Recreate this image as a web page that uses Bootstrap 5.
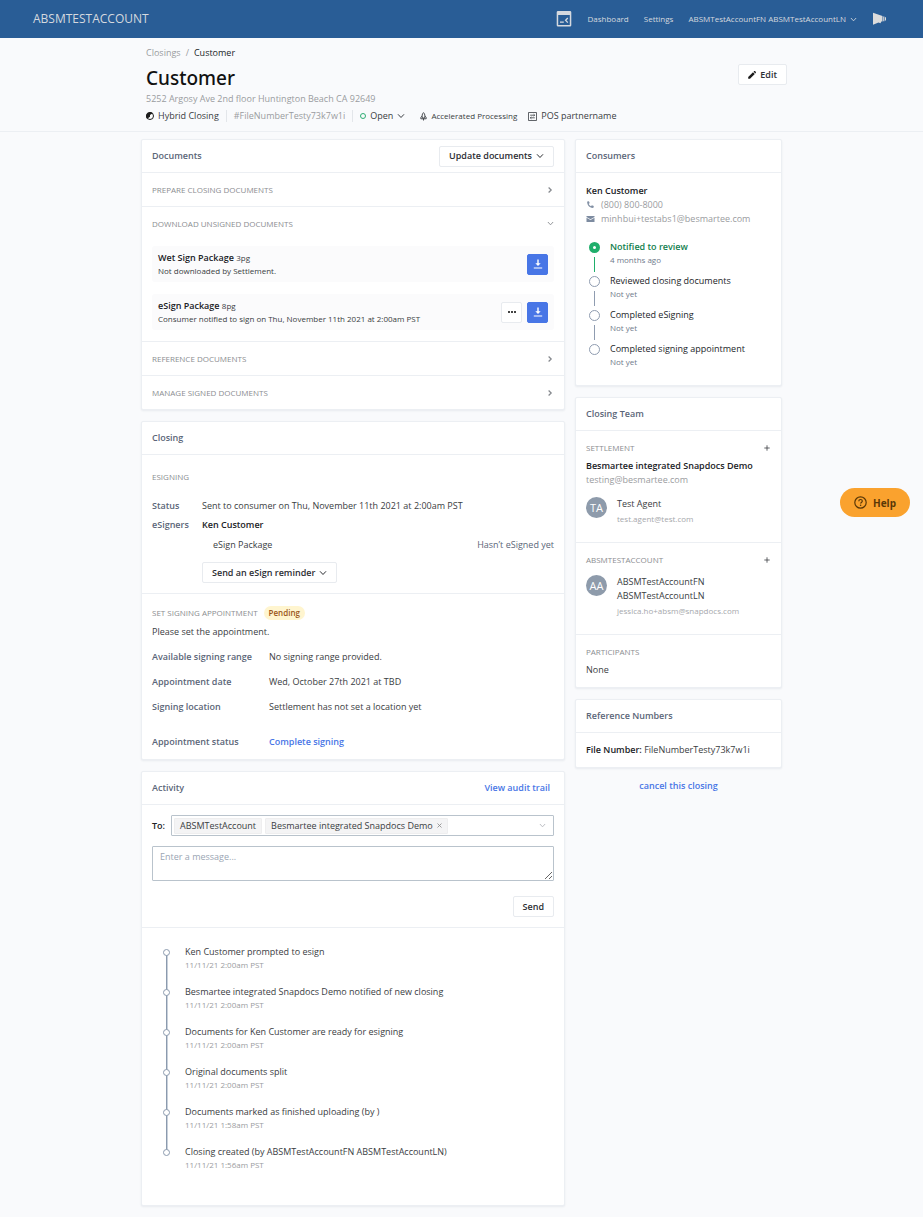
<!DOCTYPE html>
<html lang="en">
<head>
<meta charset="utf-8">
<meta name="viewport" content="width=device-width, initial-scale=1">
<title>Customer - Closings</title>
<link href="https://cdn.jsdelivr.net/npm/bootstrap@5.3.0/dist/css/bootstrap.min.css" rel="stylesheet">
<style>
  :root { --line: #eceff3; --ink: #3a3d42; --strong: #202226; --muted: #9a9ca0; --slate: #5b6678; --blue: #4876e6; }
  body { font-family: "Open Sans", "Noto Sans", sans-serif; font-size: 9px; line-height: 14px; color: var(--ink); background: #f9fafc; }
  a { text-decoration: none; color: var(--blue); }
  svg { display: block; flex: none; }
  strong, .semi { font-weight: 600; color: var(--strong); }
  .fs-tiny { font-size: 8px; }
  .dim { color: var(--muted); }
  .faint { color: #b3b6bb; }
  .slate { color: var(--slate); }

  .topbar { background: #295d96; height: 38px; padding: 0 36px 0 33px; }
  .topbar a, .topbar button { color: #d5d9df; }
  .topbar .brand { font-size: 12px; }
  .topbar .menu { font-size: 8px; gap: 15px; }
  .plain { border: 0; background: none; padding: 0; color: inherit; font-size: inherit; line-height: inherit; }

  .page-head { border-bottom: 1px solid var(--line); padding: 8px 0; }
  .head-inner { max-width: 651px; padding: 0 0 0 10px; }
  .crumbs { gap: 5px; }
  .page-title { font: 500 19px/24px "Noto Sans", "Open Sans", sans-serif; color: #111; margin: 6px 0 2px; }
  .meta { margin-top: 3px; gap: 7px; }
  .meta .rule { width: 1px; height: 12px; background: #e3e6ea; }
  .ring { width: 6px; height: 6px; border: 1px solid #2fae74; border-radius: 50%; }
  .edit { margin-top: 18px; }

  .btn-box { display: inline-flex; align-items: center; justify-content: center; height: 21px; padding: 0 9px; gap: 4px; border: 1px solid #e8ebef; border-radius: 2px; background: #fff; font-size: 9px; line-height: 14px; font-weight: 600; color: #2c2e33; }
  .btn-sq { width: 21px; padding: 0; }
  .btn-dl { background: var(--blue); border-color: var(--blue); color: #fff; }

  .columns { display: grid; grid-template-columns: minmax(0, 1fr) 207px; gap: 10px; max-width: 641px; padding-top: 7px; padding-bottom: 10px; align-items: start; }
  .stack { display: grid; gap: 11px; }
  .panel { background: #fff; border: 1px solid var(--line); border-radius: 2px; box-shadow: 0 1px 2px rgba(40, 60, 90, .08); }
  .panel-head { display: flex; align-items: center; justify-content: space-between; height: 33px; padding: 0 10px; border-bottom: 1px solid var(--line); }
  .panel-head h2 { font-size: 9px; line-height: 14px; font-weight: 600; color: var(--slate); margin: 0; }
  .block { padding: 10px; }
  .block-esign { padding-top: 15px; }
  .block-appt { padding-top: 12px; }
  .block-consumer { padding-top: 11px; }
  .block + .block, .fold + .fold, .block + .log { border-top: 1px solid var(--line); }
  .caps { font-size: 8px; line-height: 14px; font-weight: 400; color: #8b8d91; text-transform: uppercase; margin: 0; }
  .fold-toggle { display: flex; width: 100%; height: 33px; align-items: center; justify-content: space-between; padding: 0 10px; border: 0; background: none; color: #85888d; }
  .docs { display: grid; gap: 12px; padding: 6px 10px 11px; }
  .doc { min-height: 36px; background: #fbfbfc; border-radius: 3px; padding: 0 6px; gap: 5px; line-height: 13px; }

  .facts { display: grid; margin: 0; }
  .facts dt { font-weight: 600; color: var(--slate); }
  .facts dd { margin: 0; }
  .facts-sign { grid-template-columns: 50px 1fr; row-gap: 5px; margin-top: 15px; }
  .facts-appt { grid-template-columns: 117px 1fr; row-gap: 11px; margin-top: 11px; }
  .facts-appt .spaced { margin-top: 10px; }
  .package { padding: 6px 0 10px 11px; }
  .appt-head { gap: 6px; margin-bottom: 5px; }
  .pill { font-size: 8px; font-weight: 600; color: #9a5518; background: #fff5cf; border-radius: 7px; padding: 0 5px; }

  .to-row { gap: 6px; }
  .to-box { display: flex; align-items: center; gap: 3px; height: 21px; padding: 0 7px 0 2px; border: 1px solid #b9c3cc; border-radius: 1px; background: #fff; }
  .to-box input { flex: 1; min-width: 0; border: 0; outline: 0; font-size: 9px; height: 14px; }
  .tag { display: flex; align-items: center; gap: 4px; height: 16px; padding: 0 5px; background: #f4f4f5; border: 1px solid #eeeeef; border-radius: 1px; }
  .message { display: block; width: 100%; height: 35px; margin: 10px 0 15px; padding: 3px 7px; border: 1px solid #b9c3cc; border-radius: 1px; font-size: 9px; line-height: 14px; resize: vertical; }
  .message::placeholder { color: #9aa5b3; }

  .log { list-style: none; margin: 0; padding: 17px 10px 34px 21px; line-height: 13px; }
  .log li { position: relative; min-height: 40px; padding-left: 22px; }
  .log li:last-child { min-height: 26px; }
  .log li::before { content: ""; position: absolute; left: 0; top: 4px; width: 7px; height: 7px; border: 1px solid #8b9aae; border-radius: 50%; background: #fff; z-index: 1; }
  .log li:not(:last-child)::after { content: ""; position: absolute; left: 3px; top: 10px; bottom: -5px; width: 1px; background: #8b9aae; box-shadow: 1px 0 0 #c9d1db; }

  .contact { gap: 6px; }
  .steps { list-style: none; margin: 14px 0 0; padding: 0; }
  .steps li { position: relative; min-height: 34px; padding-left: 24px; color: #222529; }
  .steps li:last-child { min-height: 33px; }
  .steps li::before { content: ""; position: absolute; left: 3px; top: 2px; width: 11px; height: 11px; border: 1px solid #8f9cb0; border-radius: 50%; background: #fff; }
  .steps li:not(:last-child)::after { content: ""; position: absolute; left: 8px; top: 17px; height: 15px; width: 1px; background: #8f9cb0; }
  .steps .done { color: #12804e; font-weight: 600; }
  .steps .done::before { border: 4px solid #1fae6b; }
  .steps .done:not(:last-child)::after { background: #1fae6b; }
  .steps small { display: block; font-size: 8px; line-height: 12px; font-weight: 400; color: #6f7a8b; }

  .person { display: flex; gap: 10px; }
  .person-below { margin-top: 10px; }
  .face { flex: none; width: 21px; height: 21px; border-radius: 50%; background: #8e9bab; color: #fff; font-size: 11px; line-height: 21px; text-align: center; }
  .person small { display: block; font-size: 8px; margin-top: 1px; color: #a6a8ac; }
  .help { position: fixed; right: 13px; top: 488px; display: flex; align-items: center; gap: 6px; height: 29px; padding: 0 14px; border: 0; border-radius: 15px; background: #faa22e; color: #5a3807; font-size: 10px; font-weight: 700; }
</style>
<script src="https://cdn.jsdelivr.net/npm/bootstrap@5.3.0/dist/js/bootstrap.bundle.min.js"></script>
</head>
<body>
<svg class="d-none" aria-hidden="true">
  <symbol id="down" viewBox="0 0 8 8"><path d="M1 2.3 4 5.500 7 2.300" fill="none" stroke="currentColor"/></symbol>
  <symbol id="right" viewBox="0 0 8 8"><path d="M2.600 1.500 5.200 4 2.600 6.500" fill="none" stroke="currentColor" stroke-width="1.200"/></symbol>
  <symbol id="plus" viewBox="0 0 8 8"><path d="M4 1.300v5.400M1.300 4h5.400" stroke="currentColor" stroke-width=".8"/></symbol>
  <symbol id="load" viewBox="0 0 12 12"><path d="M5.300 1.500h1.400v3.800h2L6 8 3.300 5.300h2zM1.800 9.600h8.400v1H1.800z" fill="currentColor"/></symbol>
</svg>

<nav class="topbar d-flex align-items-center justify-content-between">
  <a class="brand" href="#">ABSMTESTACCOUNT</a>
  <div class="menu d-flex align-items-center">
    <a href="#" aria-label="Console"><svg width="16" height="16" viewBox="0 0 16 16"><path fill="currentColor" fill-rule="evenodd" d="M2 0h12a1.300 1.300 0 0 1 1.300 1.300v12.900a1.300 1.300 0 0 1-1.300 1.300H2A1.300 1.300 0 0 1 .7 14.200V1.300A1.300 1.300 0 0 1 2 0zM2.200 4v10h11.600V4z"/><path d="M4 11.200h3.800M11.800 7 9.600 9.300l2.200 2.300" fill="none" stroke="currentColor" stroke-width="1.300"/></svg></a>
    <a href="#">Dashboard</a>
    <a href="#">Settings</a>
    <button type="button" class="plain d-flex align-items-center gap-1">ABSMTestAccountFN ABSMTestAccountLN <svg width="7" height="7"><use href="#down"/></svg></button>
    <a href="#" aria-label="Announcements"><svg width="15" height="14" viewBox="0 0 15 14"><path fill="#dcdcdc" d="M1 .8 10.500 4v5.600H9.300l-.8 1.600-2-.6L1 12.700zM11.200 4.600h1.200v4.600h-1.200zM13 5.200h1v3.200h-1z"/></svg></a>
  </div>
</nav>

<header class="page-head">
  <div class="head-inner mx-auto d-flex justify-content-between align-items-start">
    <div>
      <div class="crumbs d-flex dim"><a class="dim" href="#">Closings</a><span>/</span><span class="text-dark">Customer</span></div>
      <h1 class="page-title">Customer</h1>
      <div class="dim">5252 Argosy Ave 2nd floor Huntington Beach CA 92649</div>
      <div class="meta d-flex align-items-center">
        <span class="d-flex align-items-center gap-1"><svg width="8" height="8" viewBox="0 0 8 8"><circle cx="4" cy="4" r="3.500" fill="#fff" stroke="#1c1c1c"/><path fill="#1c1c1c" d="M4 0a4 4 0 0 0-2.800 6.800L4 4.800V3l2.800-1.800A4 4 0 0 0 4 0z"/></svg>Hybrid Closing</span>
        <span class="rule"></span>
        <span class="dim">#FileNumberTesty73k7w1i</span>
        <span class="rule"></span>
        <button type="button" class="plain d-flex align-items-center gap-1"><span class="ring"></span>Open <svg width="8" height="8"><use href="#down"/></svg></button>
        <span class="fs-tiny d-flex align-items-center ms-2 gap-1"><svg width="7" height="9" viewBox="0 0 7 9"><path d="M3.500.6C5 2 5.100 3.800 4.700 6H2.300C1.900 3.800 2 2 3.500.6zM2.100 4 .8 5.600v1.200H6.200V5.600L4.900 4M3.500 6.500v2" fill="none" stroke="#3a3d42" stroke-width=".9"/></svg>Accelerated Processing</span>
        <span class="d-flex align-items-center ms-1 gap-1"><svg width="9" height="9" viewBox="0 0 9 9"><path d="M.5.500h8v8h-8zM2.200 3.200h4.200M2.600 5.800h4.200M5.600 2.200l1.200 1-1.200.9M3.400 4.900l-1.200.9 1.200 1" fill="none" stroke="#3a3d42" stroke-width=".8"/></svg>POS partnername</span>
      </div>
    </div>
    <button type="button" class="btn-box edit"><svg width="8" height="8" viewBox="0 0 8 8"><path fill="#1c1c1c" d="M.2 6 5 1.200 6.800 3 2 7.800H.2zM5.600.700 6.200.100h.8l.9.900v.7l-.6.700z"/></svg>Edit</button>
  </div>
</header>

<main class="columns mx-auto">
  <div class="stack">
    <section class="panel">
      <div class="panel-head"><h2>Documents</h2><button type="button" class="btn-box">Update documents <svg width="8" height="8"><use href="#down"/></svg></button></div>
      <div class="fold"><button type="button" class="fold-toggle"><span class="caps">Prepare closing documents</span><svg width="8" height="8"><use href="#right"/></svg></button></div>
      <div class="fold">
        <button type="button" class="fold-toggle"><span class="caps">Download unsigned documents</span><svg width="7" height="7"><use href="#down"/></svg></button>
        <div class="docs">
          <div class="doc d-flex align-items-center">
            <div class="me-auto"><div><strong>Wet Sign Package</strong> <span class="fs-tiny">3pg</span></div><div class="fs-tiny">Not downloaded by Settlement.</div></div>
            <button type="button" class="btn-box btn-sq btn-dl" aria-label="Download"><svg width="12" height="12"><use href="#load"/></svg></button>
          </div>
          <div class="doc d-flex align-items-center">
            <div class="me-auto"><div><strong>eSign Package</strong> <span class="fs-tiny">8pg</span></div><div class="fs-tiny">Consumer notified to sign on Thu, November 11th 2021 at 2:00am PST</div></div>
            <button type="button" class="btn-box btn-sq" aria-label="More"><svg width="8" height="2" viewBox="0 0 8 2"><path d="M0 0h2v2H0zM3 0h2v2H3zM6 0h2v2H6z" fill="#444"/></svg></button>
            <button type="button" class="btn-box btn-sq btn-dl" aria-label="Download"><svg width="12" height="12"><use href="#load"/></svg></button>
          </div>
        </div>
      </div>
      <div class="fold"><button type="button" class="fold-toggle"><span class="caps">Reference documents</span><svg width="8" height="8"><use href="#right"/></svg></button></div>
      <div class="fold"><button type="button" class="fold-toggle"><span class="caps">Manage signed documents</span><svg width="8" height="8"><use href="#right"/></svg></button></div>
    </section>

    <section class="panel">
      <div class="panel-head"><h2>Closing</h2></div>
      <div class="block block-esign">
        <h3 class="caps">eSigning</h3>
        <dl class="facts facts-sign">
          <dt>Status</dt><dd>Sent to consumer on Thu, November 11th 2021 at 2:00am PST</dd>
          <dt>eSigners</dt>
          <dd><span class="semi">Ken Customer</span>
            <div class="package d-flex justify-content-between"><span>eSign Package</span><span class="slate">Hasn’t eSigned yet</span></div>
            <button type="button" class="btn-box">Send an eSign reminder <svg width="8" height="8"><use href="#down"/></svg></button>
          </dd>
        </dl>
      </div>
      <div class="block block-appt">
        <div class="appt-head d-flex align-items-center"><h3 class="caps">Set signing appointment</h3><span class="pill">Pending</span></div>
        <div>Please set the appointment.</div>
        <dl class="facts facts-appt">
          <dt>Available signing range</dt><dd>No signing range provided.</dd>
          <dt>Appointment date</dt><dd>Wed, October 27th 2021 at TBD</dd>
          <dt>Signing location</dt><dd>Settlement has not set a location yet</dd>
          <dt class="spaced">Appointment status</dt><dd class="spaced"><a class="fw-semibold" href="#">Complete signing</a></dd>
        </dl>
      </div>
    </section>

    <section class="panel">
      <div class="panel-head"><h2>Activity</h2><a class="fw-semibold me-1" href="#">View audit trail</a></div>
      <form class="block">
        <div class="to-row d-flex align-items-center">
          <label class="semi" for="to">To:</label>
          <div class="to-box flex-grow-1">
            <span class="tag">ABSMTestAccount</span>
            <span class="tag">Besmartee integrated Snapdocs Demo <button type="button" class="plain" aria-label="Remove"><svg width="5" height="5" viewBox="0 0 5 5"><path d="m.5.500 4 4m0-4-4 4" stroke="#888" stroke-width=".8"/></svg></button></span>
            <input type="text" id="to">
            <svg class="faint" width="7" height="7"><use href="#down"/></svg>
          </div>
        </div>
        <textarea class="message" aria-label="Message" placeholder="Enter a message..."></textarea>
        <div class="d-flex justify-content-end"><button type="button" class="btn-box">Send</button></div>
      </form>
      <ul class="log">
        <li>Ken Customer prompted to esign<div class="fs-tiny dim">11/11/21 2:00am PST</div></li>
        <li>Besmartee integrated Snapdocs Demo notified of new closing<div class="fs-tiny dim">11/11/21 2:00am PST</div></li>
        <li>Documents for Ken Customer are ready for esigning<div class="fs-tiny dim">11/11/21 2:00am PST</div></li>
        <li>Original documents split<div class="fs-tiny dim">11/11/21 2:00am PST</div></li>
        <li>Documents marked as finished uploading (by )<div class="fs-tiny dim">11/11/21 1:58am PST</div></li>
        <li>Closing created (by ABSMTestAccountFN ABSMTestAccountLN)<div class="fs-tiny dim">11/11/21 1:56am PST</div></li>
      </ul>
    </section>
  </div>

  <aside class="stack">
    <section class="panel">
      <div class="panel-head"><h2>Consumers</h2></div>
      <div class="block block-consumer">
        <strong>Ken Customer</strong>
        <div class="contact dim d-flex align-items-center"><svg width="9" height="8" viewBox="0 0 9 8"><path fill="#8391a5" d="M1.200.500 2.900.200l.8 1.900-1 .9c.5 1 1.200 1.700 2.200 2.200l1-1 1.900.8-.3 1.800C4 7.500.8 4 1.200.500z"/></svg>(800) 800-8000</div>
        <div class="contact dim d-flex align-items-center"><svg width="9" height="8" viewBox="0 0 9 8"><path fill="#7d8ba0" d="M.5 1h8v.9L4.500 4.200.5 1.900zM.5 2.700l4 2.300 4-2.300V7h-8z"/></svg>minhbui+testabs1@besmartee.com</div>
        <ul class="steps">
          <li class="done">Notified to review<small>4 months ago</small></li>
          <li>Reviewed closing documents<small>Not yet</small></li>
          <li>Completed eSigning<small>Not yet</small></li>
          <li>Completed signing appointment<small>Not yet</small></li>
        </ul>
      </div>
    </section>

    <section class="panel">
      <div class="panel-head"><h2>Closing Team</h2></div>
      <div class="block pb-3">
        <div class="d-flex justify-content-between align-items-center mb-1"><h3 class="caps">Settlement</h3><button type="button" class="plain dim" aria-label="Add"><svg width="8" height="8"><use href="#plus"/></svg></button></div>
        <strong>Besmartee integrated Snapdocs Demo</strong>
        <div class="dim">testing@besmartee.com</div>
        <div class="person person-below"><span class="face">TA</span><div>Test Agent<small>test.agent@test.com</small></div></div>
      </div>
      <div class="block pb-3">
        <div class="d-flex justify-content-between align-items-center mb-2"><h3 class="caps">ABSMTestAccount</h3><button type="button" class="plain dim" aria-label="Add"><svg width="8" height="8"><use href="#plus"/></svg></button></div>
        <div class="person"><span class="face">AA</span><div>ABSMTestAccountFN<br>ABSMTestAccountLN<small>jessica.ho+absm@snapdocs.com</small></div></div>
      </div>
      <div class="block">
        <h3 class="caps mb-1">Participants</h3>
        <div>None</div>
      </div>
    </section>

    <section class="panel">
      <div class="panel-head"><h2>Reference Numbers</h2></div>
      <div class="block"><strong>File Number:</strong> FileNumberTesty73k7w1i</div>
    </section>
    <a class="fw-semibold text-center" href="#">cancel this closing</a>
  </aside>
</main>

<button type="button" class="help"><svg width="13" height="13" viewBox="0 0 13 13"><circle cx="6.500" cy="6.500" r="5.700" fill="none" stroke="currentColor" stroke-width="1.200"/><path d="M4.800 5.200c0-2.300 3.500-2.200 3.500-.1 0 1.300-1.700 1.300-1.700 2.500" fill="none" stroke="currentColor" stroke-width="1.200"/><circle cx="6.600" cy="9.300" r=".8" fill="currentColor"/></svg>Help</button>
</body>
</html>
